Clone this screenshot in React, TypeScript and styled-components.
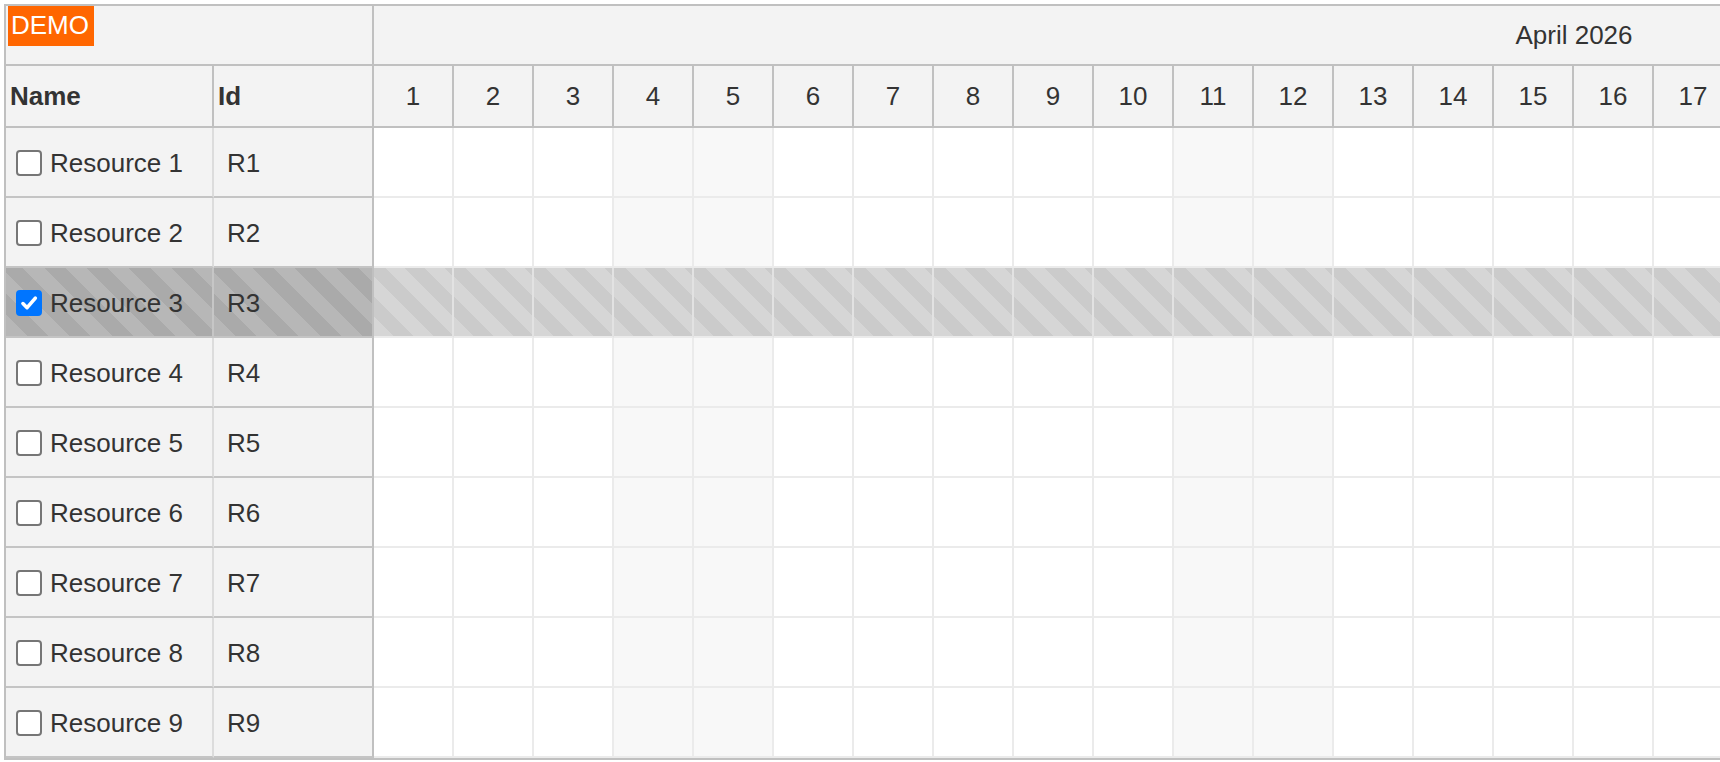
import React from "react";
import styled, { createGlobalStyle, css } from "styled-components";

const GlobalStyle = createGlobalStyle`
  html, body {
    margin: 0;
    padding: 0;
    overflow: hidden;
    background: #fff;
  }
  body {
    font-family: "Liberation Sans", Arial, sans-serif;
    color: #333;
  }
`;

const DAYS = 30;
const SELECTED = "R3";

const resources = Array.from({ length: 9 }, (_, i) => ({
  id: `R${i + 1}`,
  name: `Resource ${i + 1}`,
}));

const isWeekend = (day: number) => {
  const d = new Date(2026, 3, day).getDay();
  return d === 0 || d === 6;
};

const Scheduler = styled.div`
  display: inline-grid;
  grid-template-columns: 208px 160px repeat(${DAYS}, 80px);
  grid-template-rows: 60px 62px repeat(9, 70px);
  margin: 4px 0 0 4px;
  border: 2px solid #c0c0c0;
  border-right: none;
  font-size: 26px;

  & > * {
    box-sizing: border-box;
  }
`;

const Corner = styled.div`
  grid-column: span 2;
  display: flex;
  align-items: flex-start;
  padding-left: 2px;
  background: #f3f3f3;
  border-right: 2px solid #c0c0c0;
  border-bottom: 2px solid #c0c0c0;
`;

const DemoBadge = styled.span`
  padding: 4px 5px 6px 3px;
  line-height: 30px;
  background: #ff6600;
  color: #fff;
`;

const MonthHeader = styled.div`
  grid-column: span ${DAYS};
  display: flex;
  align-items: center;
  justify-content: center;
  background: #f3f3f3;
  border-bottom: 2px solid #c0c0c0;
`;

const ColumnHeader = styled.div`
  display: flex;
  align-items: center;
  padding-left: 4px;
  font-weight: bold;
  background: #f3f3f3;
  border-right: 2px solid #c0c0c0;
  border-bottom: 2px solid #c0c0c0;
`;

const DayHeader = styled.div`
  display: flex;
  align-items: center;
  justify-content: center;
  background: #f3f3f3;
  border-right: 2px solid #c0c0c0;
  border-bottom: 2px solid #c0c0c0;
`;

const selectedHeader = css`
  background: repeating-linear-gradient(
    45deg,
    #b7b7b7 0 15px,
    #aaaaaa 15px 30px
  );
`;

const RowHeader = styled.div<{ $kind: "name" | "id"; $selected?: boolean }>`
  display: flex;
  align-items: center;
  padding-top: 2px;
  padding-left: ${(p) => (p.$kind === "name" ? "10px" : "13px")};
  background: #f3f3f3;
  border-bottom: 2px solid #c4c4c4;
  border-right: 2px solid
    ${(p) => (p.$kind === "id" ? "#c0c0c0" : p.$selected ? "#c6c6c6" : "#dcdcdc")};
  ${(p) => p.$selected && selectedHeader}
`;

const CheckBox = styled.span<{ $checked?: boolean }>`
  box-sizing: border-box;
  display: flex;
  align-items: center;
  justify-content: center;
  flex-shrink: 0;
  width: 26px;
  height: 26px;
  margin-right: 8px;
  border-radius: 4px;
  border: 2px solid ${(p) => (p.$checked ? "#0075ff" : "#767676")};
  background: ${(p) => (p.$checked ? "#0075ff" : "#fff")};

  svg {
    width: 22px;
    height: 22px;
  }
`;

const Cell = styled.div<{ $weekend?: boolean; $selected?: boolean }>`
  background: ${(p) => (p.$weekend ? "#f8f8f8" : "#fff")};
  border-right: 2px solid #ebebeb;
  border-bottom: 2px solid #ebebeb;
  ${(p) =>
    p.$selected &&
    css`
      border-right-color: #e2e2e2;
      background: repeating-linear-gradient(
        45deg,
        #d6d6d6 0 14px,
        #cbcbcb 14px 28px
      );
    `}
`;

const Check = () => (
  <svg viewBox="0 0 16 16" fill="none">
    <path
      d="M3.6 8.4 L6.6 11.4 L12.6 4.4"
      stroke="#fff"
      strokeWidth="2.6"
      strokeLinecap="round"
      strokeLinejoin="round"
    />
  </svg>
);

const days = Array.from({ length: DAYS }, (_, i) => i + 1);

export default function App() {
  return (
    <>
      <GlobalStyle />
      <Scheduler>
        <Corner>
          <DemoBadge>DEMO</DemoBadge>
        </Corner>
        <MonthHeader>April 2026</MonthHeader>

        <ColumnHeader>Name</ColumnHeader>
        <ColumnHeader>Id</ColumnHeader>
        {days.map((d) => (
          <DayHeader key={d}>{d}</DayHeader>
        ))}

        {resources.map((r) => {
          const selected = r.id === SELECTED;
          return (
            <React.Fragment key={r.id}>
              <RowHeader $kind="name" $selected={selected}>
                <CheckBox $checked={selected}>{selected && <Check />}</CheckBox>
                {r.name}
              </RowHeader>
              <RowHeader $kind="id" $selected={selected}>
                {r.id}
              </RowHeader>
              {days.map((d) => (
                <Cell key={d} $weekend={isWeekend(d)} $selected={selected} />
              ))}
            </React.Fragment>
          );
        })}
      </Scheduler>
    </>
  );
}
